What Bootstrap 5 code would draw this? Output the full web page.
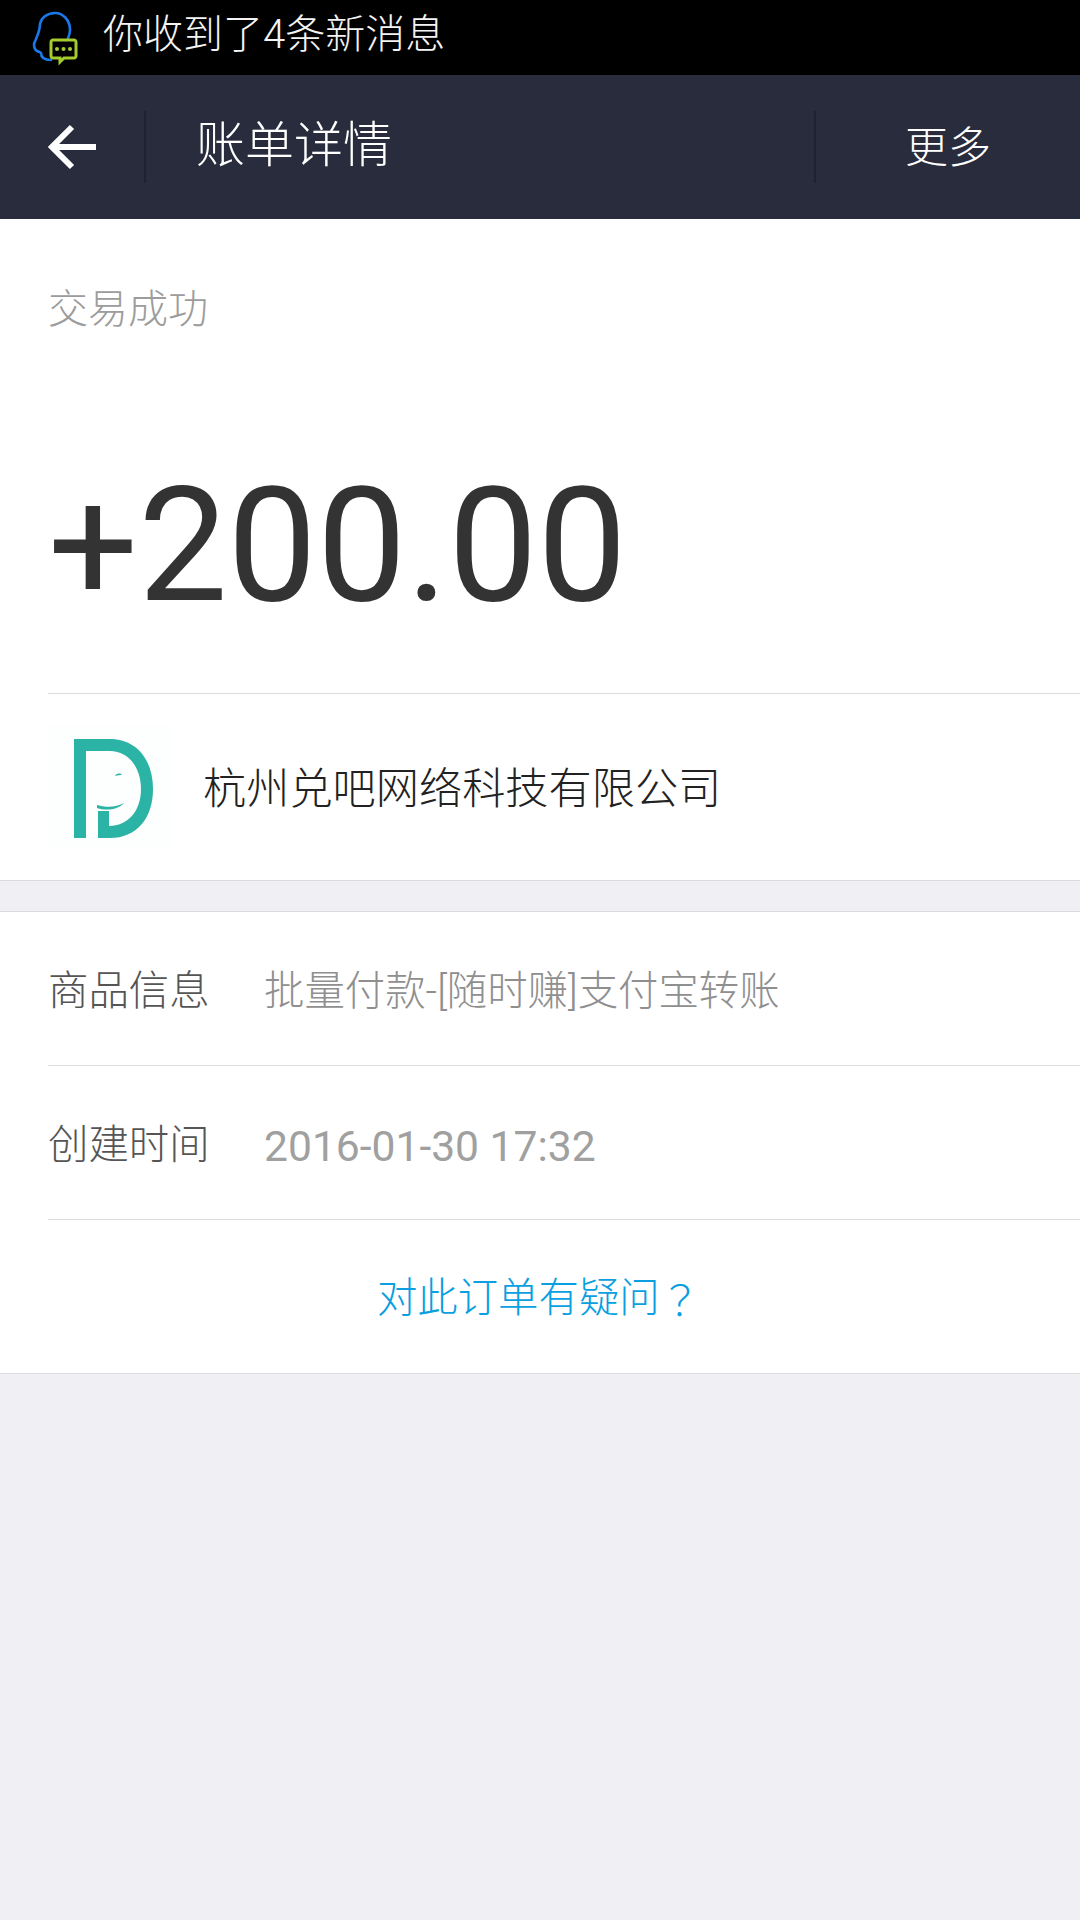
<!DOCTYPE html>
<html lang="zh-CN">
<head>
    <meta charset="UTF-8">
    <meta name="viewport" content="width=device-width, initial-scale=1.0">
    <title>账单详情</title>
    <link href="https://cdn.jsdelivr.net/npm/bootstrap@5.3.0/dist/css/bootstrap.min.css" rel="stylesheet">
    <style>
        body {
            background-color: #efeff4;
            font-family: Roboto, "Noto Sans CJK SC", sans-serif;
            min-height: 1920px;
        }
        .notify-bar {
            height: 75px;
            background-color: #000;
            color: #f4f4f4;
            font-size: 40px;
            line-height: 1;
            font-weight: 300;
            padding-left: 30px;
        }
        .notify-text {
            margin-left: 23px;
            margin-top: -5px;
        }
        .title-bar {
            height: 144px;
            background-color: #292c3d;
            color: #fff;
        }
        .back-box {
            width: 146px;
            height: 72px;
            border-right: 2px solid #20222f;
            padding-left: 48px;
        }
        .title-text {
            font-size: 49px;
            line-height: 1;
            font-weight: 300;
            margin-left: 50px;
            margin-top: -3px;
        }
        .more-box {
            width: 266px;
            height: 72px;
            border-left: 2px solid #20222f;
            font-size: 43px;
            line-height: 1;
            font-weight: 300;
            margin-left: auto;
            padding-top: 2px;
        }
        .bill-head {
            height: 662px;
            background-color: #fff;
            border-bottom: 1px solid #dcdce0;
            padding-left: 48px;
        }
        .bill-status {
            height: 148px;
            padding-top: 71px;
            font-size: 40px;
            line-height: 1;
            font-weight: 300;
            color: #9c9c9c;
        }
        .bill-amount {
            height: 327px;
            padding-top: 86px;
            border-bottom: 1px solid #dcdcdc;
            font-size: 159px;
            line-height: 1.17;
            color: #333;
        }
        .bill-company {
            height: 186px;
            font-size: 43.2px;
            line-height: 1;
            font-weight: 300;
            color: #222;
        }
        .company-logo {
            width: 122px;
            height: 122px;
            margin-right: 33px;
            padding-left: 10px;
            padding-top: 4px;
            background-color: #fdfefe;
        }
        .company-name {
            margin-top: 6px;
        }
        .bill-info {
            margin-top: 30px;
            background-color: #fff;
            border-top: 1px solid #dcdce0;
            border-bottom: 1px solid #dcdce0;
            padding-left: 48px;
            font-size: 40.4px;
            line-height: 1;
            font-weight: 300;
        }
        .info-row {
            height: 154px;
            padding-top: 7px;
            border-bottom: 1px solid #dcdcdc;
        }
        .info-label {
            width: 216px;
            color: #555;
        }
        .info-value {
            color: #8f8f8f;
        }
        .info-date {
            font-size: 42.6px;
            font-weight: 400;
            color: #a0a0a0;
        }
        .info-link {
            height: 153px;
            margin-left: -48px;
            padding-top: 5px;
            padding-right: 3px;
            color: #0a9fe0;
            text-decoration: none;
        }
        .link-mark {
            font-family: "Noto Sans CJK TC", sans-serif;
        }
    </style>
</head>
<body>
    <div class="notify-bar d-flex align-items-center">
        <svg width="50" height="56" viewBox="0 0 50 56">
            <path d="M38 28C40 24 40 22 40 20C40 10 33 3 25 3C17 3 11 8 10 14C10 22 6 28 4 34C4 38 5 40 7 41C9 42 10 42 11 43C11 47 13 50 21 50" fill="none" stroke="#1a78e8" stroke-width="2.6" stroke-linecap="round"/>
            <path d="M23 30H44C45 30 46 31 46 32V46C46 47 45 48 44 48H34L30 52V48H23C22 48 21 47 21 46V32C21 31 22 30 23 30Z" fill="#000" stroke="#a5cc2e" stroke-width="3"/>
            <circle cx="27" cy="39" r="2" fill="#a5cc2e"/>
            <circle cx="33.500" cy="39" r="2" fill="#a5cc2e"/>
            <circle cx="40" cy="39" r="2" fill="#a5cc2e"/>
        </svg>
        <span class="notify-text">你收到了4条新消息</span>
    </div>

    <div class="title-bar d-flex align-items-center">
        <div class="back-box d-flex align-items-center">
            <svg width="48" height="48" viewBox="0 0 48 48">
                <path d="M48 24H6M24 4L4 24L24 44" fill="none" stroke="#fff" stroke-width="6"/>
            </svg>
        </div>
        <div class="title-text">账单详情</div>
        <div class="more-box d-flex align-items-center justify-content-center">更多</div>
    </div>

    <div class="bill-head">
        <div class="bill-status">交易成功</div>
        <div class="bill-amount">+200.00</div>
        <div class="bill-company d-flex align-items-center">
            <div class="company-logo d-flex align-items-center justify-content-center">
                <svg width="80" height="100" viewBox="0 0 80 100">
                    <path d="M0 0H36C62 0 79 20 79 50C79 80 62 99 36 99H24V72H35V87C54 87 67 72 67 50C67 28 54 12 36 12H12V99H0Z" fill="#2bb3a6"/>
                    <path d="M23 66C33 69 43 68 50 64C44 71 32 72 23 69Z" fill="#2bb3a6"/>
                    <path d="M41 37C43 34 46 34 48 36C46 36 44 36 41 37Z" fill="#2bb3a6"/>
                </svg>
            </div>
            <span class="company-name">杭州兑吧网络科技有限公司</span>
        </div>
    </div>

    <div class="bill-info">
        <div class="info-row d-flex align-items-center">
            <span class="info-label">商品信息</span>
            <span class="info-value">批量付款-[随时赚]支付宝转账</span>
        </div>
        <div class="info-row d-flex align-items-center">
            <span class="info-label">创建时间</span>
            <span class="info-value info-date">2016-01-30 17:32</span>
        </div>
        <a class="info-link d-flex align-items-center justify-content-center" href="#">对此订单有疑问<span class="link-mark">？</span></a>
    </div>

    <script src="https://cdn.jsdelivr.net/npm/bootstrap@5.3.0/dist/js/bootstrap.bundle.min.js"></script>
</body>
</html>
